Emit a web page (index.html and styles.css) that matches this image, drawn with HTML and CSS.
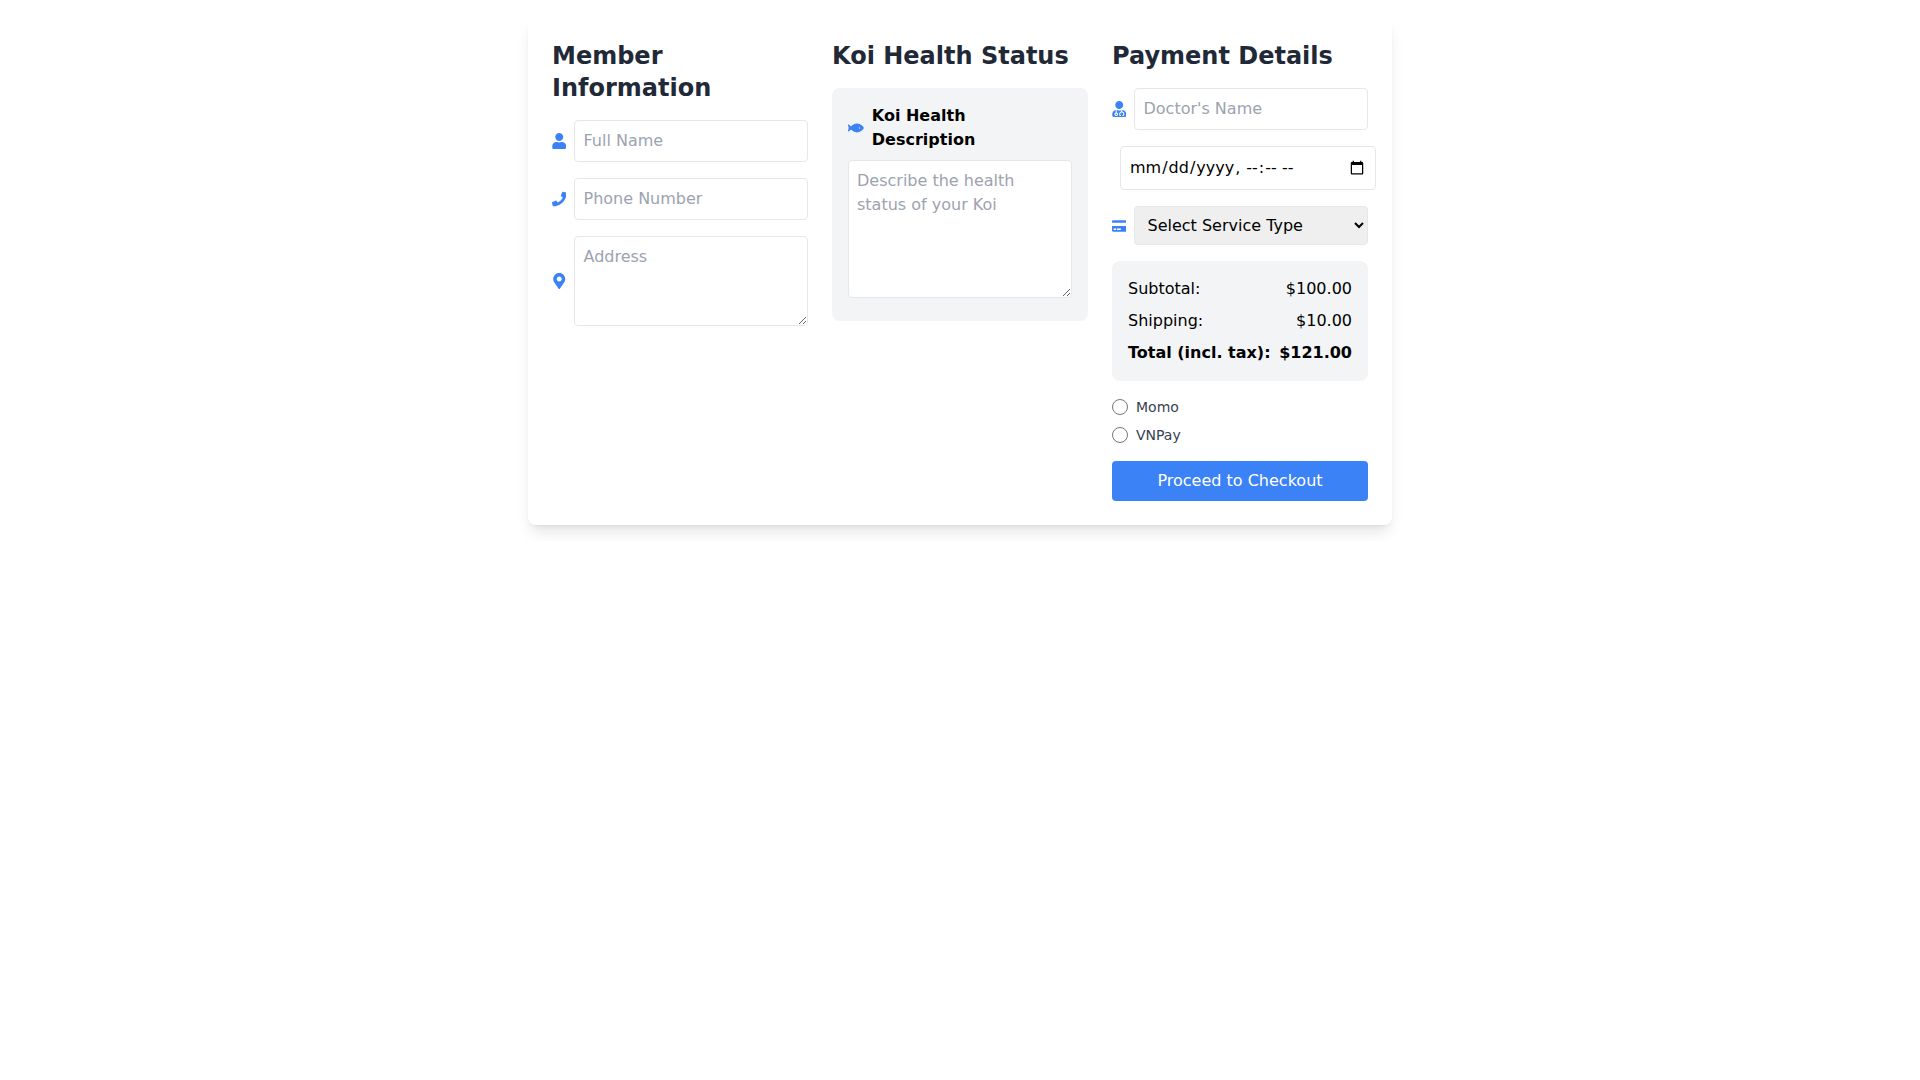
FILE: index.html
```html
<!DOCTYPE html>
<html lang="en">
<head>
    <meta charset="UTF-8">
    <meta name="viewport" content="width=device-width, initial-scale=1.0">
    <title>Koi Health Checkout</title>

    <link rel="stylesheet" href="styles.css">
</head>
<body>
    <main class="container">
        <form class="card">
            <!-- Member Information -->
            <section>
                <h2>Member Information</h2>
                <div class="form-row">
                    <svg class="icon" viewBox="0 0 448 512"><path d="M224 256c70.7 0 128-57.3 128-128S294.7 0 224 0 96 57.3 96 128s57.3 128 128 128zm89.6 32h-16.7c-22.2 10.2-46.9 16-72.9 16s-50.6-5.8-72.9-16h-16.7C60.2 288 0 348.2 0 422.4V464c0 26.5 21.5 48 48 48h352c26.5 0 48-21.5 48-48v-41.6c0-74.2-60.2-134.4-134.4-134.4z"/></svg>
                    <input type="text" class="field" name="fullName" placeholder="Full Name">
                </div>
                <div class="form-row">
                    <svg class="icon" viewBox="0 0 512 512"><path d="M493.4 24.6l-104-24c-11.3-2.6-22.9 3.3-27.5 13.9l-48 112c-4.2 9.8-1.4 21.3 6.9 28l60.6 49.6c-36 76.7-98.9 140.5-177.2 177.2l-49.6-60.6c-6.8-8.3-18.2-11.1-28-6.9l-112 48C3.9 366.5-2 378.1.6 389.4l24 104C27.1 504.2 36.7 512 48 512c256.1 0 464-207.5 464-464 0-11.2-7.7-20.9-18.6-23.4z"/></svg>
                    <input type="text" class="field" name="phone" placeholder="Phone Number">
                </div>
                <div class="form-row">
                    <svg class="icon" viewBox="0 0 384 512"><path d="M172.268 501.67C26.97 291.031 0 269.413 0 192 0 85.961 85.961 0 192 0s192 85.961 192 192c0 77.413-26.97 99.031-172.268 309.67-9.535 13.774-29.93 13.773-39.464 0zM192 272c44.183 0 80-35.817 80-80s-35.817-80-80-80-80 35.817-80 80 35.817 80 80 80z"/></svg>
                    <textarea class="field" name="address" rows="3" placeholder="Address"></textarea>
                </div>
            </section>

            <!-- Koi Health Status -->
            <section>
                <h2>Koi Health Status</h2>
                <div class="panel">
                    <div class="panel-title">
                        <svg class="icon" viewBox="0 0 576 512"><path d="M327.1 96c-89.97 0-168.54 54.77-212.27 101.63L27.5 131.58c-12.13-9.18-30.24.6-27.14 14.66L24.54 256 .35 365.77c-3.1 14.06 15.01 23.83 27.14 14.66l87.33-66.05C158.55 361.23 237.13 416 327.1 416 464.56 416 576 288 576 256S464.56 96 327.1 96zm87.43 184c-13.25 0-24-10.75-24-24 0-13.26 10.75-24 24-24 13.26 0 24 10.74 24 24 0 13.25-10.75 24-24 24z"/></svg>
                        <span>Koi Health Description</span>
                    </div>
                    <textarea class="field" name="description" rows="5" placeholder="Describe the health status of your Koi"></textarea>
                </div>
            </section>

            <!-- Payment Details -->
            <section>
                <h2>Payment Details</h2>
                <div class="form-row">
                    <svg class="icon" viewBox="0 0 448 512"><path d="M224 256c70.7 0 128-57.3 128-128S294.7 0 224 0 96 57.3 96 128s57.3 128 128 128zM104 424c0 13.3 10.7 24 24 24s24-10.7 24-24-10.7-24-24-24-24 10.7-24 24zm216-135.4v49c36.5 7.4 64 39.8 64 78.4v41.7c0 7.6-5.4 14.2-12.9 15.7l-32.2 6.4c-4.3.9-8.5-1.9-9.4-6.3l-3.1-15.7c-.9-4.3 1.9-8.6 6.3-9.4l19.3-3.9V416c0-62.8-96-65.1-96 1.9v26.7l19.3 3.9c4.3.9 7.1 5.1 6.3 9.4l-3.1 15.7c-.9 4.3-5.1 7.1-9.4 6.3l-31.2-4.2c-7.9-1.1-13.8-7.8-13.8-15.9V416c0-38.6 27.5-70.9 64-78.4v-45.2c-2.2.7-4.4 1.1-6.6 1.9-18 6.3-37.3 9.8-57.4 9.8s-39.4-3.5-57.4-9.8c-7.4-2.6-14.9-4.2-22.6-5.2v81.6c23.1 6.9 40 28.1 40 53.4 0 30.9-25.1 56-56 56s-56-25.1-56-56c0-25.3 16.9-46.5 40-53.4v-80.4C48.5 301 0 355.8 0 422.4v44.8C0 491.9 20.1 512 44.8 512h358.4c24.7 0 44.8-20.1 44.8-44.8v-44.8c0-72-56.8-130.3-128-133.8z"/></svg>
                    <input type="text" class="field" name="doctor" placeholder="Doctor's Name">
                </div>
                <div class="form-row">
                    <input type="datetime-local" class="field date-field" name="date">
                </div>
                <div class="form-row">
                    <svg class="icon" viewBox="0 0 576 512"><path d="M0 432c0 26.5 21.5 48 48 48h480c26.5 0 48-21.5 48-48V256H0v176zm192-68c0-6.6 5.4-12 12-12h136c6.6 0 12 5.4 12 12v40c0 6.6-5.4 12-12 12H204c-6.6 0-12-5.4-12-12v-40zm-128 0c0-6.6 5.4-12 12-12h72c6.6 0 12 5.4 12 12v40c0 6.6-5.4 12-12 12H76c-6.6 0-12-5.4-12-12v-40zM576 80v48H0V80c0-26.5 21.5-48 48-48h480c26.5 0 48 21.5 48 48z"/></svg>
                    <select class="field select-field" name="service">
                        <option value="">Select Service Type</option>
                    </select>
                </div>

                <div class="panel summary">
                    <div class="summary-row"><span>Subtotal:</span><span>$100.00</span></div>
                    <div class="summary-row"><span>Shipping:</span><span>$10.00</span></div>
                    <div class="summary-row total"><span>Total (incl. tax):</span><span>$121.00</span></div>
                </div>

                <div class="payment-methods">
                    <label><input type="radio" name="payment" value="momo">Momo</label>
                    <label><input type="radio" name="payment" value="vnpay">VNPay</label>
                </div>

                <button type="submit" class="button">Proceed to Checkout</button>
            </section>
        </form>
    </main>
</body>
</html>
```
FILE: styles.css
```css
* {
    box-sizing: border-box;
}
body {
    font-family: 'DejaVu Sans', sans-serif;
    font-size: 16px;
    line-height: 24px;
    background-color: white;
    color: black;
    margin: 0;
}
.container {
    max-width: 896px;
    margin: 0 auto;
    padding: 16px;
}
.card {
    display: grid;
    grid-template-columns: repeat(3, minmax(0, 1fr));
    gap: 24px;
    padding: 24px;
    background-color: white;
    border-radius: 8px;
    box-shadow: 0 10px 15px -3px rgba(0, 0, 0, 0.1), 0 4px 6px -4px rgba(0, 0, 0, 0.1);
}
h2 {
    margin: 0 0 16px;
    font-size: 24px;
    line-height: 32px;
    font-weight: bold;
    color: #1f2937;
}
.form-row {
    display: flex;
    align-items: center;
    margin-bottom: 16px;
}
.icon {
    width: 16px;
    height: 16px;
    margin-right: 8px;
    fill: #3b82f6;
}
.field {
    width: 100%;
    margin: 0;
    padding: 8px;
    border: 1px solid #e5e7eb;
    border-radius: 4px;
    font-family: inherit;
    font-size: 16px;
    line-height: 24px;
    color: black;
}
.field::placeholder {
    color: #9ca3af;
}
textarea {
    resize: vertical;
}
.date-field {
    flex-shrink: 0;
    height: 44px;
    margin-left: 8px;
}
.select-field {
    height: 39px;
    background-color: #efefef;
}
/* Gray boxes */
.panel {
    padding: 16px;
    background-color: #f3f4f6;
    border-radius: 8px;
}
.panel-title {
    display: flex;
    align-items: center;
    margin-bottom: 8px;
    font-weight: bold;
}
.summary {
    margin-bottom: 16px;
}
.summary-row {
    display: flex;
    justify-content: space-between;
    margin-bottom: 8px;
}
.summary-row.total {
    margin-bottom: 0;
    font-weight: bold;
}
.payment-methods {
    display: flex;
    flex-direction: column;
    gap: 8px;
    margin-bottom: 16px;
}
.payment-methods label {
    display: flex;
    align-items: center;
    font-size: 14px;
    line-height: 20px;
    color: #374151;
}
.payment-methods input {
    width: 16px;
    height: 16px;
    margin: 0 8px 0 0;
}
.button {
    width: 100%;
    padding: 8px 16px;
    border: none;
    border-radius: 4px;
    background-color: #3b82f6;
    color: white;
    font-family: inherit;
    font-size: 16px;
    line-height: 24px;
    cursor: pointer;
}
.button:hover {
    background-color: #2563eb;
}
```
